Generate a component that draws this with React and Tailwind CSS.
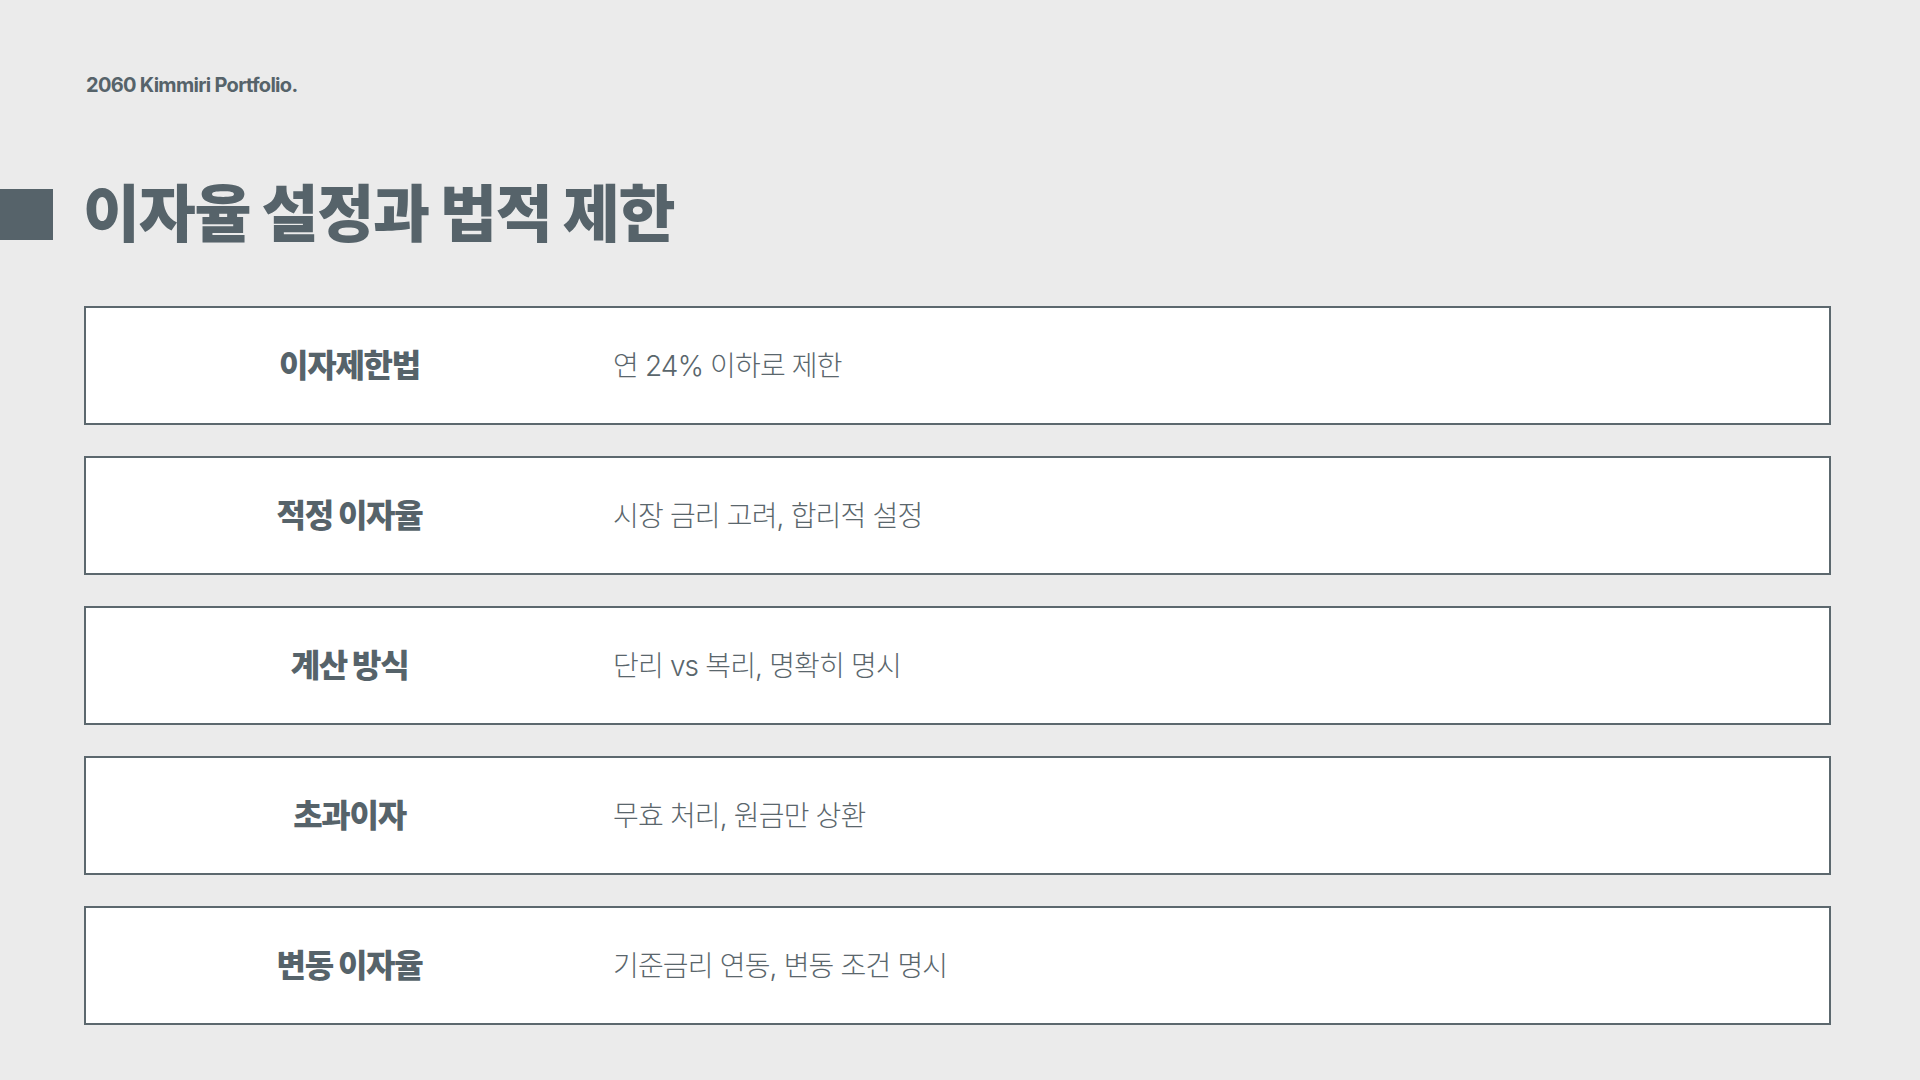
import * as React from "react";

const rows = [
  { label: "이자제한법", value: "연 24% 이하로 제한" },
  { label: "적정 이자율", value: "시장 금리 고려, 합리적 설정" },
  { label: "계산 방식", value: "단리 vs 복리, 명확히 명시" },
  { label: "초과이자", value: "무효 처리, 원금만 상환" },
  { label: "변동 이자율", value: "기준금리 연동, 변동 조건 명시" },
];

const font = { fontFamily: 'Inter, "Noto Sans CJK KR", sans-serif' };

const App = () => {
  return (
    <div className="min-h-screen w-full bg-[#ebebeb] text-[#56636a]" style={font}>
      {/* header */}
      <div className="pl-[86px] pt-[73px] text-[20px] leading-[24px] font-bold tracking-[-0.035em]">
        2060 Kimmiri Portfolio.
      </div>

      {/* title */}
      <div className="mt-[92px] flex h-[51px] items-center">
        <div className="h-[51px] w-[53px] bg-[#56636a]" />
        <h1 className="ml-[30px] text-[62px] leading-none font-black tracking-[-0.02em]">
          이자율 설정과 법적 제한
        </h1>
      </div>

      {/* rows */}
      <div className="mt-[66px] flex flex-col gap-[31px] pl-[84px] pr-[89px]">
        {rows.map((r) => (
          <div
            key={r.label}
            className="grid h-[119px] grid-cols-[527px_1fr] items-center border-2 border-[#5c686e] bg-white"
          >
            <div className="text-center text-[32px] font-black tracking-[-0.04em]">{r.label}</div>
            <div className="text-[28px] font-light tracking-[-0.03em] text-[#5a666c]">{r.value}</div>
          </div>
        ))}
      </div>
    </div>
  );
};

export default App;
